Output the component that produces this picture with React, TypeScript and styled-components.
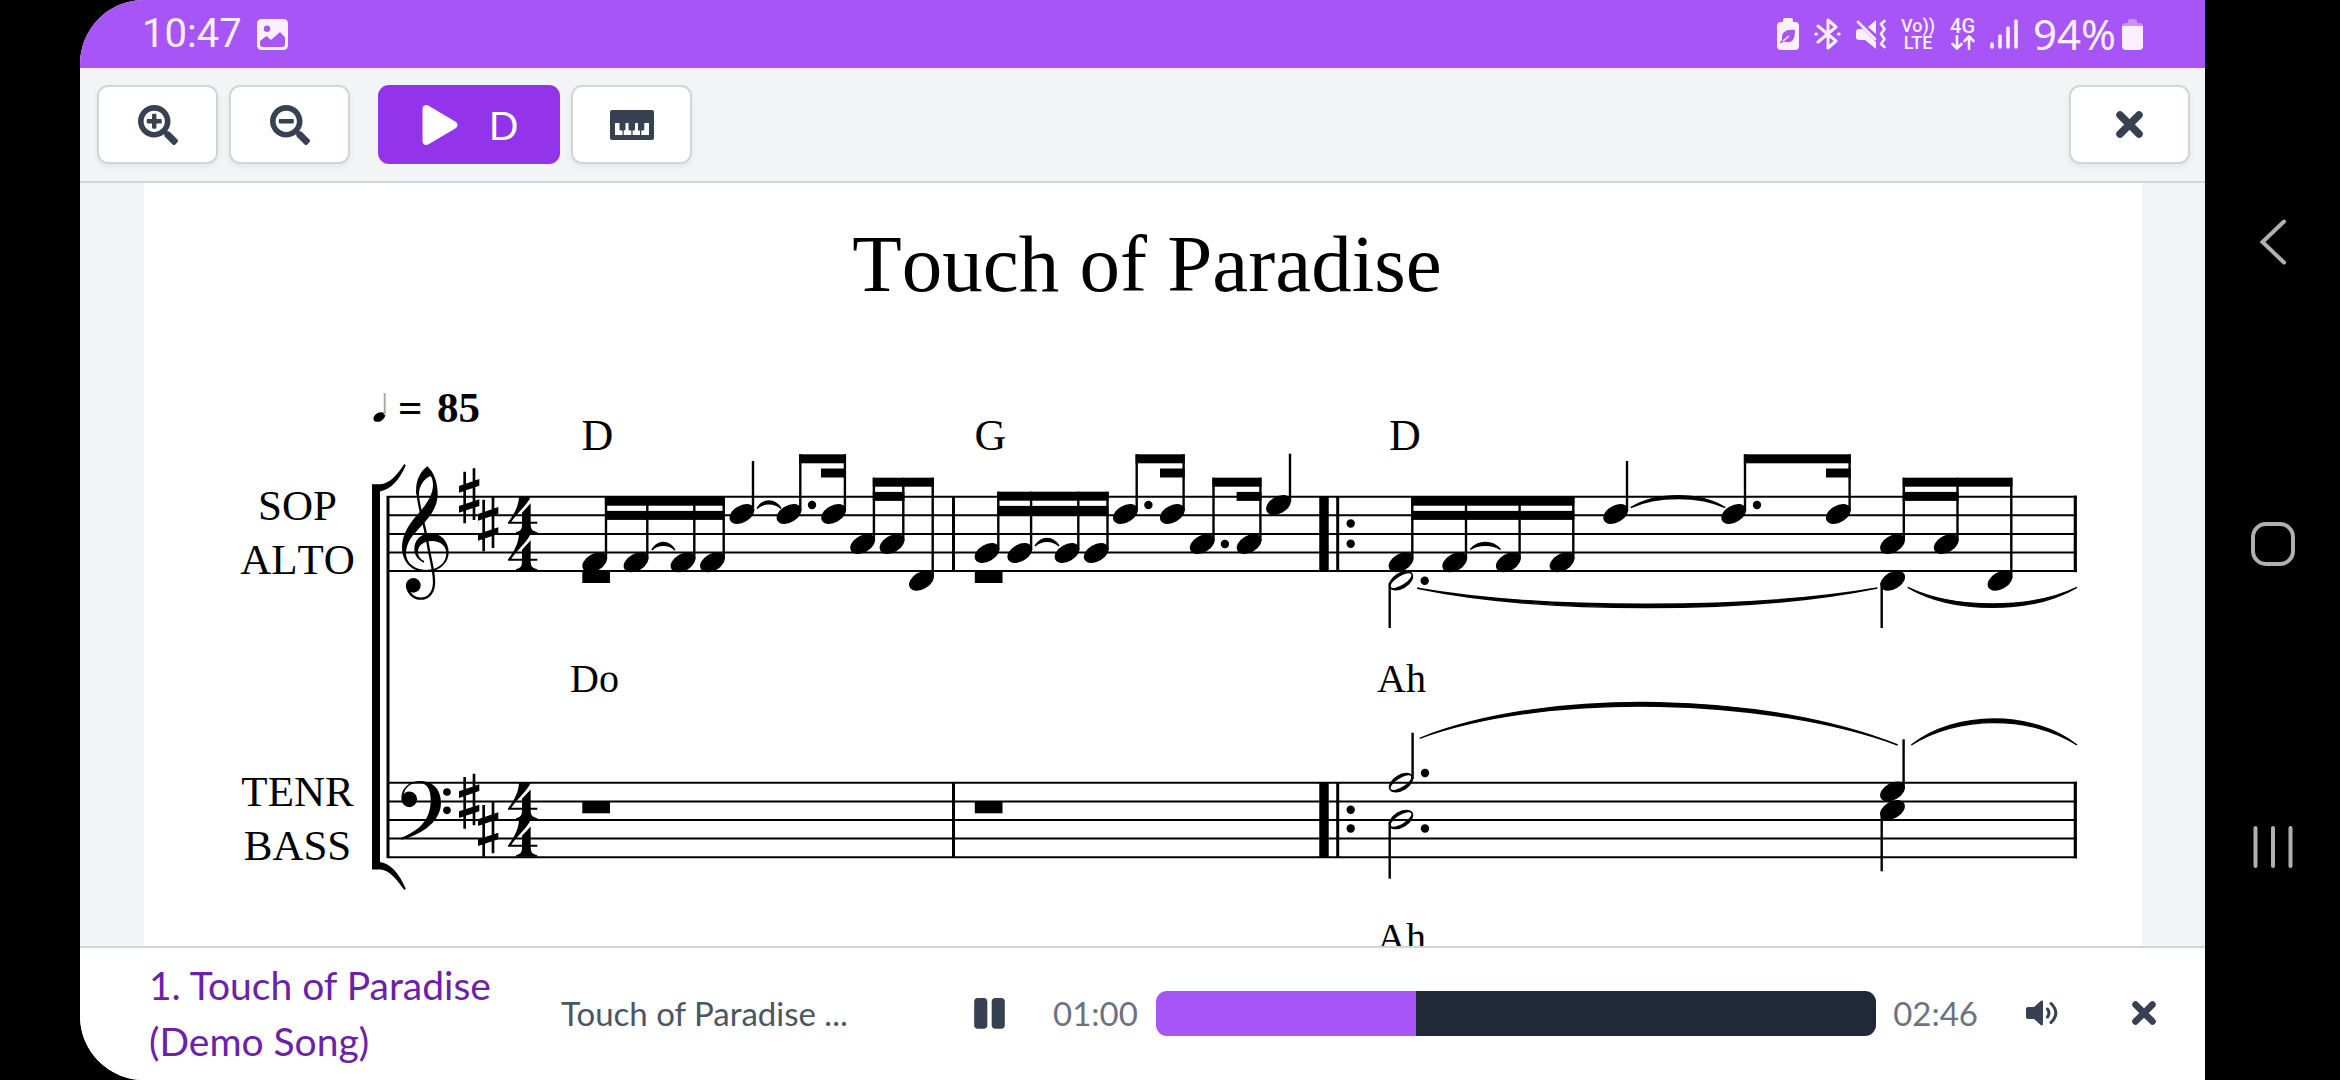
import React, { useState } from 'react';
import styled, { createGlobalStyle } from 'styled-components';
import { FaPause, FaPlay, FaSearchMinus, FaSearchPlus } from 'react-icons/fa';

const color = {
  bar: '#a855f7',
  primary: '#9333ea',
  link: '#6b21a8',
  panel: '#f3f4f6',
  line: '#d1d5db',
  ink: '#374151',
  text: '#4b5563',
  muted: '#6b7280',
  track: '#1f2937',
  status: '#faf0ff',
  system: '#b0b0b0',
};

const GlobalStyle = createGlobalStyle`
  *, *::before, *::after { box-sizing: border-box; }
  body { margin: 0; background: #000; font-family: Lato, sans-serif; }
  button { font: inherit; padding: 0; border: 0; background: none; cursor: pointer; }
  svg { display: block; flex: none; }
`;

const Device = styled.div`
  display: flex;
  height: 100vh;
  padding-left: 80px;
  background: #000;
`;

const Screen = styled.div`
  flex: 1;
  min-width: 0;
  display: flex;
  flex-direction: column;
  overflow: hidden;
  background: #fff;
  border-radius: 64px 0 0 64px;
`;

const StatusBar = styled.header`
  display: flex;
  align-items: center;
  justify-content: space-between;
  height: 68px;
  padding: 0 62px;
  background: ${color.bar};
  color: ${color.status};
  line-height: 68px;
`;

const StatusGroup = styled.div<{ $gap: number }>`
  display: flex;
  align-items: center;
  gap: ${(p) => p.$gap}px;
`;

const Clock = styled.span`
  font-family: Roboto, sans-serif;
  font-size: 40px;
`;

const Charge = styled.span`
  font-family: 'Noto Sans', sans-serif;
  font-size: 42px;
`;

const Network = styled.span<{ $size: number }>`
  display: flex;
  flex-direction: column;
  align-items: center;
  font: 500 ${(p) => p.$size}px/17px Roboto, sans-serif;
`;

const Toolbar = styled.div`
  display: flex;
  gap: 11px;
  padding: 17px 15px 17px 17px;
  background: ${color.panel};
  border-bottom: 2px solid ${color.line};
`;

const ToolButton = styled.button`
  display: flex;
  align-items: center;
  justify-content: center;
  width: 121px;
  height: 79px;
  color: ${color.ink};
  background: #fff;
  border: 2px solid ${color.line};
  border-radius: 11px;
  box-shadow: 0 3px 6px rgba(0, 0, 0, 0.06);
`;

const PlayButton = styled(ToolButton)`
  gap: 29px;
  width: 182px;
  margin-left: 17px;
  color: #fff;
  font-size: 39px;
  background: ${color.primary};
  border-color: ${color.primary};
  box-shadow: none;
`;

const CloseTool = styled(ToolButton)`
  margin-left: auto;
`;

const ScoreArea = styled.main`
  flex: 1;
  min-height: 0;
  overflow: hidden;
  padding: 0 63px 0 64px;
  background: ${color.panel};
`;

const Sheet = styled.article`
  min-height: 100%;
  padding-top: 35px;
  background: #fff;
  color: #000;
`;

const SheetTitle = styled.h1`
  margin: 0;
  padding-left: 8px;
  font: 400 81px/92px 'Liberation Serif', serif;
  font-kerning: none;
  text-align: center;
`;

const Notation = styled.svg`
  width: 100%;
  font-family: 'Liberation Serif', serif;
  font-kerning: none;
`;

const Player = styled.footer`
  display: flex;
  align-items: center;
  padding: 9px 49px 11px 69px;
  background: #fff;
  border-top: 2px solid ${color.line};
`;

const SongLink = styled.a`
  width: 382px;
  margin-right: 30px;
  color: ${color.link};
  font-size: 39px;
  line-height: 56px;
  text-decoration: none;
`;

const TrackName = styled.span`
  width: 411px;
  color: ${color.text};
  font-size: 33px;
`;

const Time = styled.span`
  color: ${color.muted};
  font-size: 33px;
`;

const Seek = styled.input`
  appearance: none;
  flex: 1;
  min-width: 0;
  height: 45px;
  margin: 0 17px 0 18px;
  border-radius: 11px;
  background: linear-gradient(${color.bar}, ${color.bar}) 0 0 / var(--played) 100% no-repeat ${color.track};
  &::-webkit-slider-thumb { appearance: none; width: 1px; height: 45px; background: transparent; }
`;

const IconButton = styled.button<{ $before?: number; $after?: number }>`
  display: flex;
  margin-left: ${(p) => p.$before ?? 0}px;
  margin-right: ${(p) => p.$after ?? 0}px;
  color: ${color.ink};
`;

const SystemNav = styled.nav`
  display: flex;
  flex-direction: column;
  width: 135px;
  padding: 91px 0 82px;
`;

const SystemButton = styled.button`
  flex: 1;
  display: flex;
  align-items: center;
  justify-content: center;
`;

/* ---------- icons ---------- */

const CrossIcon = ({ size }: { size: number }) => (
  <svg width={size} height={size} viewBox="0 0 27 27" stroke="currentColor" strokeWidth="7.5" strokeLinecap="round">
    <path d="M4 4 L23 23 M23 4 L4 23" />
  </svg>
);

const PianoIcon = () => (
  <svg width="44" height="30" viewBox="0 0 44 30">
    <rect width="44" height="30" rx="2" fill="currentColor" />
    <path
      fill="#fff"
      d="M5 13 H9.5 V19 Q9.5 20.5 11 20.5 H12.5 V25 H5Z M15.5 13 H18.5 V19 Q18.5 20.5 20 20.5 H21.3 V25 H13.7 V20.5 Q15.5 20.5 15.5 19Z M25 13 H28 V20.5 H30 V25 H22.6 V20.5 H23.8 Q25 20.5 25 19Z M34.3 13 H39 V25 H31.3 V20.5 H32.8 Q34.3 20.5 34.3 19Z"
    />
  </svg>
);

const SpeakerIcon = () => (
  <svg width="32" height="26" viewBox="0 0 32 26" fill="none" stroke="currentColor" strokeWidth="3" strokeLinecap="round">
    <path d="M0 9 Q0 7 2 7 H8 L15 0.8 Q17 0 17 2 V24 Q17 26 15 25.2 L8 19 H2 Q0 19 0 17Z" fill="currentColor" stroke="none" />
    <path d="M21.5 9 Q24.5 13 21.5 17 M25 3.5 Q34.5 13 25 22.5" />
  </svg>
);

const PictureIcon = () => (
  <svg width="31" height="31" viewBox="0 0 31 31">
    <path
      fill="currentColor"
      fillRule="evenodd"
      d="M5 0 H26 Q31 0 31 5 V26 Q31 31 26 31 H5 Q0 31 0 26 V5 Q0 0 5 0Z M10 6.5 A3.2 3.2 0 1 0 10 12.9 A3.2 3.2 0 1 0 10 6.5Z M3 22 L9.5 17 L14 21 L23 13 L28 18.5 V25 Q28 28 25 28 H6 Q3 28 3 25Z"
    />
  </svg>
);

const LeafBatteryIcon = () => (
  <svg width="22" height="32" viewBox="0 0 22 32">
    <path
      fill="currentColor"
      fillRule="evenodd"
      d="M6 4 V2 Q6 0 8 0 H14 Q16 0 16 2 V4 H18 Q22 4 22 8 V28 Q22 32 18 32 H4 Q0 32 0 28 V8 Q0 4 4 4Z M18 12 C8 11 4 15 5 22 L3 24 V25.5 L7 23.5 C16 26 18 21 18 12Z"
    />
    <path d="M6 23 L12 18" stroke="currentColor" strokeWidth="1.6" />
  </svg>
);

const BluetoothIcon = () => (
  <svg width="27" height="32" viewBox="0 0 27 32" fill="none" stroke="currentColor" strokeWidth="3" strokeLinejoin="round" strokeLinecap="round">
    <path d="M4 8 L22 23 L14 30 V2 L22 9 L4 24" />
    <path d="M1.8 16 H2.6 M24.4 16 H25.2" />
  </svg>
);

const MuteIcon = () => (
  <svg width="30" height="30" viewBox="0 0 30 30">
    <path fill="currentColor" d="M0 13 Q0 10 3 10 H7 L20 23 V30 L9 21 H3 Q0 21 0 18Z M12 8 L20 1 V15Z" />
    <path
      fill="none"
      stroke="currentColor"
      strokeWidth="2.6"
      strokeLinecap="round"
      strokeLinejoin="round"
      d="M2 3 L19 20 M28.5 2 L25 5 L28.5 10 L25 15 L28.5 20 L25 25 L28.5 28"
    />
  </svg>
);

const DataArrowsIcon = () => (
  <svg width="24" height="15" viewBox="0 0 24 15" fill="none" stroke="currentColor" strokeWidth="2.6" strokeLinecap="round" strokeLinejoin="round">
    <path d="M6 1 V13 M1.5 9 L6 13.5 L10.5 9 M18 14 V2 M13.5 6 L18 1.5 L22.5 6" />
  </svg>
);

const SignalIcon = () => (
  <svg width="28" height="30" viewBox="0 0 28 30" stroke="currentColor" strokeWidth="3.6" strokeLinecap="round">
    <path d="M2 25 V28 M10 17 V28 M18 9 V28 M26 2 V28" />
  </svg>
);

const BatteryIcon = () => (
  <svg width="21" height="31" viewBox="0 0 21 31" fill="currentColor">
    <path opacity="0.4" d="M0 7 Q0 4 4 4 H6 V2 Q6 0 8 0 H13 Q15 0 15 2 V4 H17 Q21 4 21 7Z" />
    <path d="M0 7 H21 V27 Q21 31 17 31 H4 Q0 31 0 27Z" />
  </svg>
);

/* ---------- notation ---------- */

type Pt = [number, number];

const Staff = ({ top }: { top: number }) => (
  <g stroke="#000" strokeWidth="2">
    {[0, 1, 2, 3, 4].map((i) => (
      <line key={i} x1="387" x2="2077" y1={top + i * 18.6} y2={top + i * 18.6} />
    ))}
    <line x1="953.5" x2="953.5" y1={top} y2={top + 74.5} strokeWidth="3" />
    <line x1="1324" x2="1324" y1={top} y2={top + 74.5} strokeWidth="9.5" />
    <line x1="1337.7" x2="1337.7" y1={top} y2={top + 74.5} strokeWidth="3" />
    <line x1="2075.3" x2="2075.3" y1={top - 1} y2={top + 75.5} strokeWidth="3.2" />
  </g>
);

const Head = ({ at: [x, y] }: { at: Pt }) => (
  <ellipse rx="13.4" ry="8.5" transform={`translate(${x} ${y}) rotate(-30)`} />
);

const OpenHead = ({ at: [x, y] }: { at: Pt }) => (
  <g transform={`translate(${x} ${y}) rotate(-32)`}>
    <path
      fillRule="evenodd"
      d="M-13.5 0 A13.5 8 0 1 1 13.5 0 A13.5 8 0 1 1 -13.5 0Z M-12 0 A12 4.3 0 1 0 12 0 A12 4.3 0 1 0 -12 0Z"
    />
  </g>
);

const Stem = ({ x, y1, y2 }: { x: number; y1: number; y2: number }) => (
  <line x1={x} x2={x} y1={y1} y2={y2} stroke="#000" strokeWidth="2.4" />
);

const Dot = ({ at: [x, y] }: { at: Pt }) => <circle cx={x} cy={y} r="4.2" />;

const Beam = ({ x1, x2, y }: { x1: number; x2: number; y: number }) => (
  <rect x={x1} y={y} width={x2 - x1} height="9" />
);

const Rest = ({ x, y }: { x: number; y: number }) => <rect x={x} y={y} width="27.7" height="12" />;

const Slur = ({ from, to, h, t = 2.8 }: { from: Pt; to: Pt; h: number; t?: number }) => {
  const w = (to[0] - from[0]) * 0.27;
  const outer = h / 0.75;
  const inner = (h - Math.sign(h) * t) / 0.75;
  const bend = (a: Pt, b: Pt, s: number, k: number) =>
    `C${a[0] + s * w} ${a[1] + k} ${b[0] - s * w} ${b[1] + k} ${b[0]} ${b[1]}`;
  return (
    <path
      d={`M${from[0]} ${from[1]} ${bend(from, to, 1, outer)} ${bend(to, from, -1, inner)}Z`}
      stroke="#000"
      strokeWidth="1.4"
    />
  );
};

/* A run of up-stemmed notes under one beam; `sub` holds the second-level beam spans. */
const Beamed = ({ notes, top, sub }: { notes: Pt[]; top: number; sub: Pt[] }) => (
  <g>
    {notes.map((n) => (
      <g key={n[0]}>
        <Head at={n} />
        <Stem x={n[0] + 11.3} y1={top} y2={n[1] - 3} />
      </g>
    ))}
    <Beam x1={notes[0][0] + 10.2} x2={notes[notes.length - 1][0] + 12.4} y={top} />
    {sub.map(([a, b]) => (
      <Beam key={a} x1={a} x2={b} y={top + 14.2} />
    ))}
  </g>
);

const Sharp = ({ at: [x, y] }: { at: Pt }) => (
  <g transform={`translate(${x} ${y}) scale(0.3333)`}>
    <path d="M-17 -73 h8 V82 h-8Z M11 -83 h8 V72 h-8Z M-30 -30 L31 -51 V-31 L-30 -10Z M-30 30 L31 10 V30 L-30 50Z" />
  </g>
);

const Four = ({ y }: { y: number }) => (
  <g transform={`translate(508 ${y}) scale(0.3333)`}>
    <path d="M33 0 H68 C61 20 31 45 10 75 H42 V48 L68 20 V75 H88 V81 H68 C68 97 72 103 88 106 V111 H24 V106 C39 103 42 97 42 81 H0 V77 C21 50 32 25 33 0Z" />
  </g>
);

const TrebleClef = () => (
  <g transform="translate(220 370) scale(0.3333)">
    <path d="M622 289 C641 305 654 338 653 375 C652 412 630 440 606 466 C582 492 558 515 558 550 C558 580 585 600 618 600 C653 600 679 580 679 550 C679 528 662 513 636 513 C612 513 594 525 594 546 C594 558 601 568 613 573 L611 578 C594 570 583 556 583 538 C583 508 605 490 632 490 C664 490 686 516 686 547 C686 582 655 606 618 606 C577 606 546 578 546 532 C546 490 572 455 600 425 C622 400 639 372 639 345 C639 332 636 322 631 318 C612 326 596 350 597 375 L589 372 C585 335 600 305 622 289Z" />
    <path d="M592 360 C594 410 615 465 624 525 C632 575 644 605 642 642 C640 672 622 686 602 686 C582 686 564 670 561 648" fill="none" stroke="#000" strokeWidth="7" />
    <circle cx="580" cy="646" r="22" />
  </g>
);

const BassClef = () => (
  <g transform="translate(220 650) scale(0.3333)">
    <path d="M544 446 C543 415 568 393 600 393 C640 393 663 420 663 458 C663 512 610 552 545 569 L542 564 C600 540 630 510 632 455 C634 418 620 398 596 398 C572 398 556 412 552 430Z" />
    <circle cx="568" cy="448" r="23.5" />
    <circle cx="681" cy="426" r="11.5" />
    <circle cx="681" cy="481" r="11.5" />
  </g>
);

const Score = () => (
  <Notation viewBox="144 310 1998 680" role="img" aria-label="Score, first system">
    <g fontSize="43" textAnchor="middle">
      <text x="297.5" y="519.5">SOP</text>
      <text x="297.5" y="573.5">ALTO</text>
      <text x="297.5" y="806">TENR</text>
      <text x="297.5" y="860">BASS</text>
    </g>
    <g fontSize="43" fontWeight="700">
      <text x="398" y="421.7">=</text>
      <text x="437" y="421.7">85</text>
    </g>
    <ellipse rx="6.4" ry="4.2" transform="translate(379.3 417) rotate(-30)" />
    <line x1="384.7" x2="384.7" y1="393" y2="415" stroke="#aaa" strokeWidth="2" />
    <g fontSize="44">
      <text x="581.5" y="449.5">D</text>
      <text x="974.5" y="449.5">G</text>
      <text x="1389" y="449.5">D</text>
    </g>
    <g fontSize="40">
      <text x="570" y="692">Do</text>
      <text x="1377" y="692">Ah</text>
      <text x="1377" y="951">Ah</text>
    </g>

    <path d="M372 484.3 H380 C390 483.5 397 475 404.3 464 L405.8 465.3 C399 481 391 489 380 491.5 V862 C391 864 399 873 405.8 888.7 L404.3 890 C397 880 389 869.5 380 869.5 H372Z" />
    <line x1="388" x2="388" y1="496" y2="858" stroke="#000" strokeWidth="3" />
    <Staff top={496.7} />
    <Staff top={782.8} />

    <TrebleClef />
    <Sharp at={[469, 496]} />
    <Sharp at={[488, 524]} />
    <Four y={496.7} />
    <Four y={533.7} />
    <BassClef />
    <Sharp at={[469, 801.3]} />
    <Sharp at={[488, 829.3]} />
    <Four y={782.8} />
    <Four y={819.8} />

    <Beamed notes={[[594.7, 562.3], [636, 562.3], [683, 562.3], [712.4, 562.3]]} top={496.7} sub={[[605, 724.6]]} />
    <Slur from={[651.7, 550]} to={[675, 550]} h={-7.5} />
    <Rest x={582.3} y={571} />
    <Head at={[741.9, 514]} />
    <Stem x={753} y1={461} y2={511} />
    <Slur from={[757, 508.5]} to={[781, 508.5]} h={-7.5} />
    <Beamed notes={[[789, 514], [833.6, 514]]} top={454.3} sub={[[821, 846]]} />
    <Dot at={[812, 505]} />
    <Beamed notes={[[862.6, 544], [892, 544], [921.4, 580.7]]} top={477.7} sub={[[872.8, 904.4]]} />

    <Beamed notes={[[987, 553], [1019.8, 553], [1067, 553], [1096.2, 553]]} top={491.7} sub={[[997.3, 1108.5]]} />
    <Slur from={[1035, 546]} to={[1059, 546]} h={-7.5} />
    <Rest x={974.8} y={571} />
    <Beamed notes={[[1125.4, 514], [1172.3, 514]]} top={454.3} sub={[[1160, 1184.7]]} />
    <Dot at={[1148.4, 505]} />
    <Beamed notes={[[1202.2, 544], [1249.1, 544]]} top={477.7} sub={[[1236.6, 1261.5]]} />
    <Dot at={[1224.9, 544]} />
    <Head at={[1278.5, 505]} />
    <Stem x={1290} y1={453.7} y2={502} />

    <Dot at={[1350.7, 523.5]} />
    <Dot at={[1350.7, 543.7]} />
    <Beamed notes={[[1401, 562.3], [1454.7, 562.3], [1508.3, 562.3], [1562, 562.3]]} top={496.7} sub={[[1411.3, 1574.3]]} />
    <Slur from={[1470.3, 549.5]} to={[1500.5, 549.5]} h={-7} />
    <OpenHead at={[1401, 580.7]} />
    <Stem x={1389.7} y1={583} y2={628} />
    <Dot at={[1424.7, 580.7]} />
    <Slur from={[1417.3, 588.3]} to={[1877.3, 588]} h={19.5} t={3.4} />
    <Head at={[1615.7, 514]} />
    <Stem x={1627} y1={461} y2={511} />
    <Slur from={[1630.7, 507.7]} to={[1725.3, 507.7]} h={-12} />
    <Beamed notes={[[1733.7, 514], [1838.3, 514]]} top={454.3} sub={[[1826, 1850.7]]} />
    <Dot at={[1757, 505]} />
    <Beamed notes={[[1892.5, 544], [1946.2, 544], [2000, 580.7]]} top={477.7} sub={[[1902.7, 1958.6]]} />
    <Head at={[1892.7, 580.7]} />
    <Stem x={1881.7} y1={583} y2={628} />
    <Slur from={[1907.7, 587.3]} to={[2077, 587.3]} h={20} t={3.4} />

    <Rest x={582.3} y={801.3} />
    <Rest x={974.8} y={801.3} />
    <Dot at={[1350.7, 809.7]} />
    <Dot at={[1350.7, 828.5]} />
    <OpenHead at={[1401, 782.7]} />
    <Stem x={1412.6} y1={732.7} y2={779} />
    <Dot at={[1425, 773]} />
    <OpenHead at={[1401, 819.5]} />
    <Stem x={1389.7} y1={822} y2={878.7} />
    <Dot at={[1425, 828.5]} />
    <Slur from={[1419.7, 738.3]} to={[1897.7, 745]} h={-39} t={3.6} />
    <Head at={[1892.5, 791.5]} />
    <Head at={[1892.5, 810]} />
    <Stem x={1903.6} y1={739.3} y2={789} />
    <Stem x={1881.7} y1={812} y2={871.3} />
    <Slur from={[1911.3, 745]} to={[2077, 745]} h={-26} t={3.6} />
  </Notation>
);

/* ---------- app ---------- */

const DURATION = 166;

const clock = (s: number) =>
  `${String(Math.floor(s / 60)).padStart(2, '0')}:${String(Math.round(s) % 60).padStart(2, '0')}`;

export default function App() {
  const [position, setPosition] = useState(60);
  const played = { '--played': `${(position / DURATION) * 100}%` } as React.CSSProperties;

  return (
    <>
      <GlobalStyle />
      <Device>
        <Screen>
          <StatusBar>
            <StatusGroup $gap={15}>
              <Clock>10:47</Clock>
              <PictureIcon />
            </StatusGroup>
            <StatusGroup $gap={15}>
              <LeafBatteryIcon />
              <BluetoothIcon />
              <MuteIcon />
              <Network $size={18}>
                <span>Vo))</span>
                <span>LTE</span>
              </Network>
              <Network $size={20}>
                <span>4G</span>
                <DataArrowsIcon />
              </Network>
              <SignalIcon />
              <StatusGroup $gap={6}>
                <Charge>94%</Charge>
                <BatteryIcon />
              </StatusGroup>
            </StatusGroup>
          </StatusBar>

          <Toolbar>
            <ToolButton aria-label="Zoom in"><FaSearchPlus size={40} /></ToolButton>
            <ToolButton aria-label="Zoom out"><FaSearchMinus size={40} /></ToolButton>
            <PlayButton><FaPlay size={40} />D</PlayButton>
            <ToolButton aria-label="Keyboard"><PianoIcon /></ToolButton>
            <CloseTool aria-label="Close score"><CrossIcon size={27} /></CloseTool>
          </Toolbar>

          <ScoreArea>
            <Sheet>
              <SheetTitle>Touch of Paradise</SheetTitle>
              <Score />
            </Sheet>
          </ScoreArea>

          <Player>
            <SongLink href="#song">1. Touch of Paradise (Demo Song)</SongLink>
            <TrackName>Touch of Paradise ...</TrackName>
            <IconButton aria-label="Pause" $after={46}><FaPause size={35} /></IconButton>
            <Time>{clock(position)}</Time>
            <Seek
              type="range"
              aria-label="Position"
              min={0}
              max={DURATION}
              value={position}
              style={played}
              onChange={(e) => setPosition(Number(e.target.value))}
            />
            <Time>{clock(DURATION)}</Time>
            <IconButton aria-label="Volume" $before={48} $after={74}><SpeakerIcon /></IconButton>
            <IconButton aria-label="Close player"><CrossIcon size={24} /></IconButton>
          </Player>
        </Screen>

        <SystemNav aria-label="System">
          <SystemButton aria-label="Back">
            <svg width="28" height="46" viewBox="0 0 28 46" fill="none" stroke={color.system} strokeWidth="4" strokeLinecap="round">
              <path d="M25 2.5 L3.5 23 L25 43.5" />
            </svg>
          </SystemButton>
          <SystemButton aria-label="Home">
            <svg width="44" height="44" viewBox="0 0 44 44" fill="none" stroke={color.system} strokeWidth="4">
              <rect x="2" y="2" width="40" height="40" rx="13" />
            </svg>
          </SystemButton>
          <SystemButton aria-label="Recent apps">
            <svg width="40" height="42" viewBox="0 0 40 42" stroke={color.system} strokeWidth="4" strokeLinecap="round">
              <path d="M2.5 2 V40 M20 2 V40 M37.5 2 V40" />
            </svg>
          </SystemButton>
        </SystemNav>
      </Device>
    </>
  );
}
